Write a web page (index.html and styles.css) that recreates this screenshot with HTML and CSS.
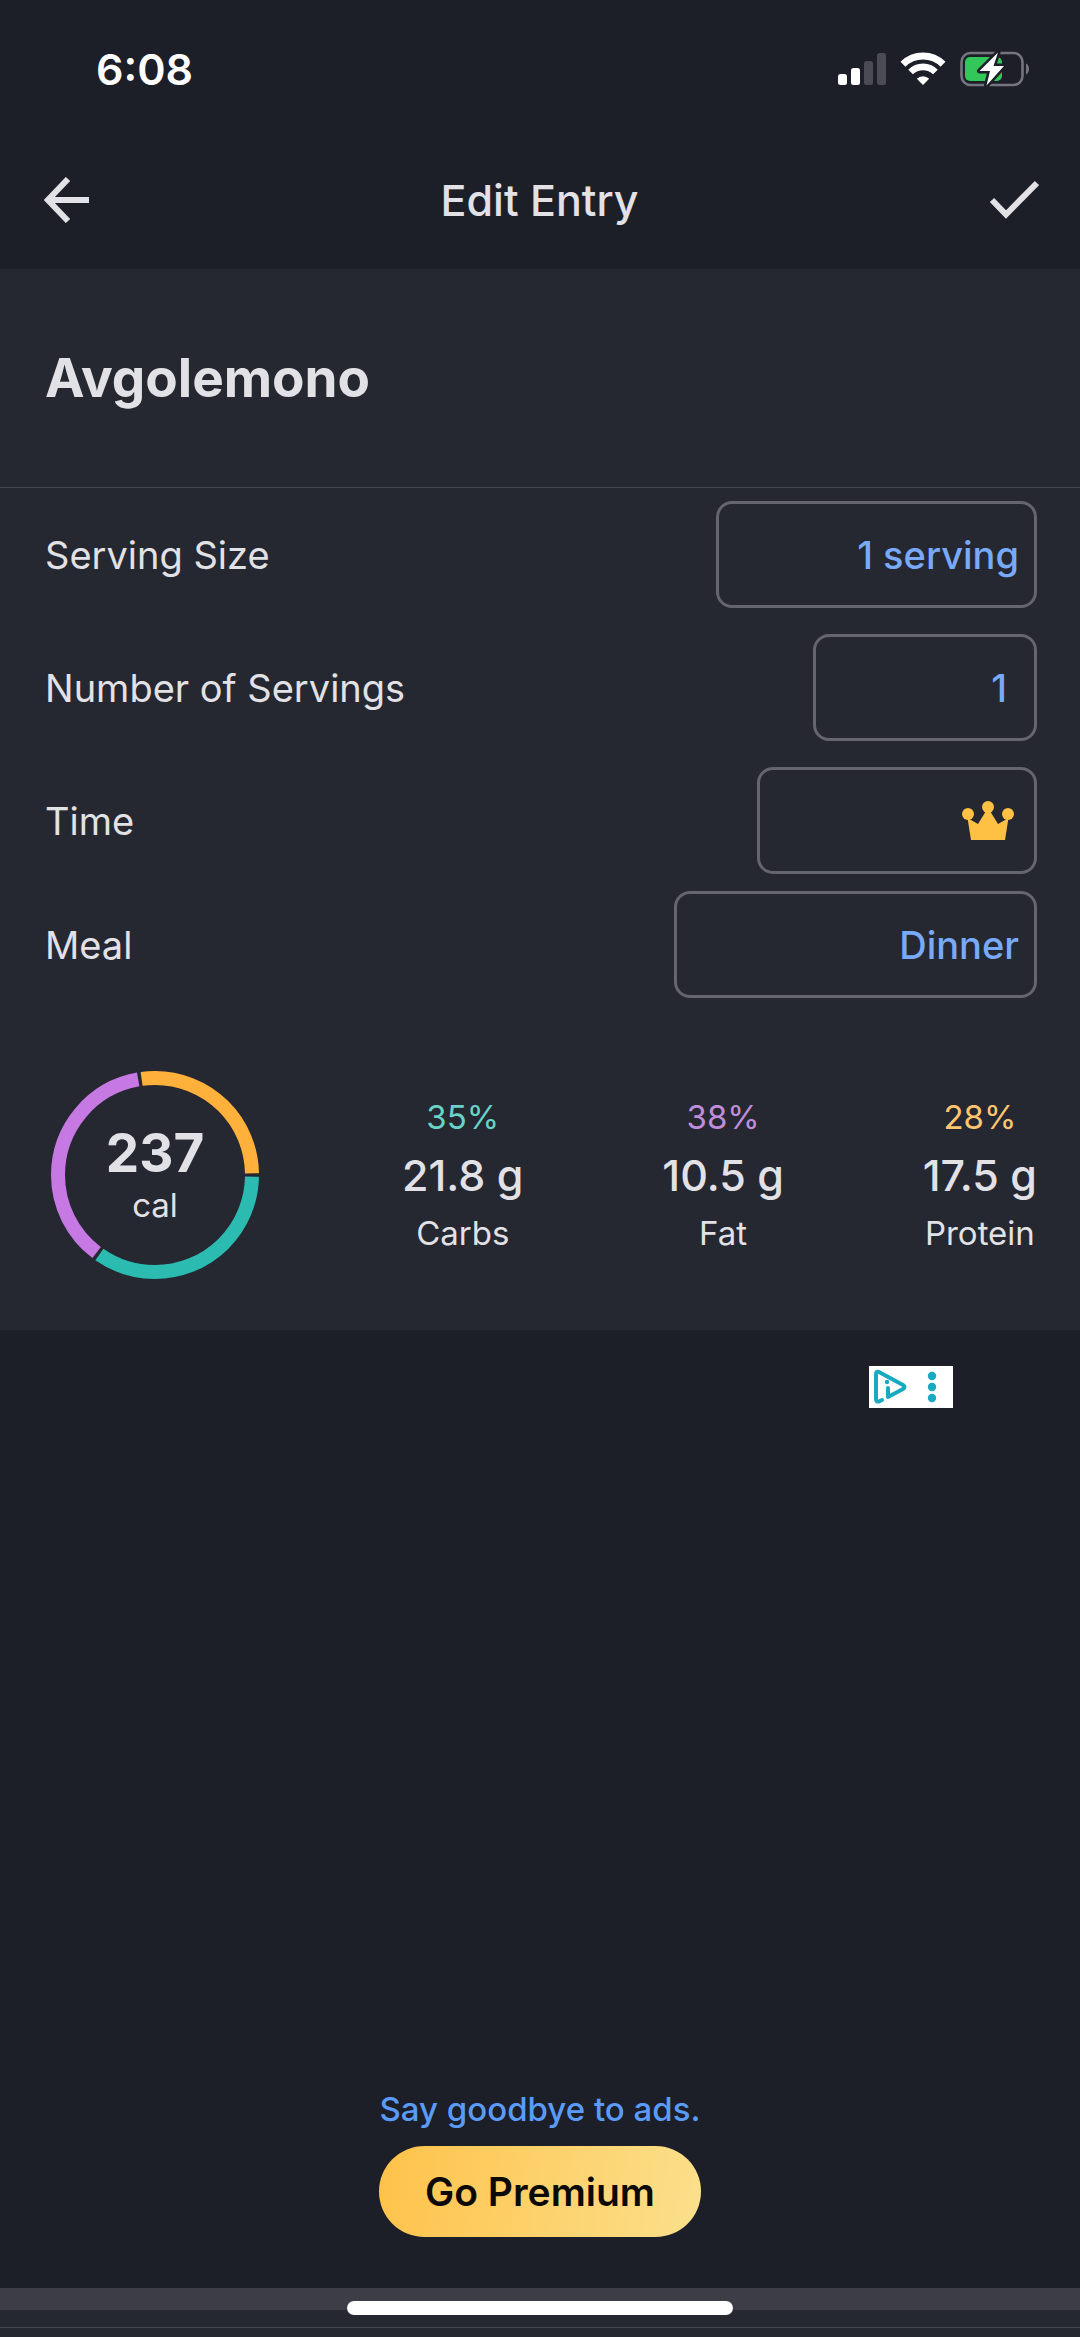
FILE: index.html
```html
<!DOCTYPE html>
<html lang="en">
<head>
    <meta charset="UTF-8">
    <meta name="viewport" content="width=device-width, initial-scale=1.0">
    <title>Edit Entry</title>
    <link rel="stylesheet" href="styles.css">
</head>
<body>

    <header class="header">
        <div class="status-bar">
            <span class="time">6:08</span>
            <div class="status-icons">
                <svg width="48" height="32" viewBox="0 0 48 32">
                    <rect x="0" y="21" width="9" height="11" rx="2.5" fill="#fff"/>
                    <rect x="13" y="15" width="9" height="17" rx="2.5" fill="#fff"/>
                    <rect x="26" y="8" width="9" height="24" rx="2.5" fill="#4a4b55"/>
                    <rect x="39" y="0" width="9" height="32" rx="2.5" fill="#4a4b55"/>
                </svg>
                <svg width="46" height="34" viewBox="0 0 46 34" fill="none" stroke="#fff">
                    <path d="M3 12.2a28.5 28.5 0 0 1 40 0" stroke-width="7"/>
                    <path d="M10.6 20a17.6 17.6 0 0 1 24.8 0" stroke-width="6.6"/>
                    <path d="M23 33l-6.2-6.2a8.8 8.8 0 0 1 12.4 0z" fill="#fff" stroke="none"/>
                </svg>
                <svg width="70" height="36" viewBox="0 0 70 36">
                    <rect x="1.5" y="2" width="61" height="32" rx="9" fill="none" stroke="#74757e" stroke-width="2.6"/>
                    <path d="M66 12.500c4 1.500 4 9.500 0 11z" fill="#74757e"/>
                    <rect x="5" y="6" width="37" height="24" rx="5" fill="#33c759"/>
                    <path d="M38 1.500L19.500 20H30l-3.500 14.500L44 15H33.500z" fill="#fff" stroke="#1c1e28" stroke-width="5" paint-order="stroke" stroke-linejoin="round"/>
                </svg>
            </div>
        </div>
        <nav class="nav">
            <button class="btn-icon" aria-label="Back">
                <svg width="46" height="46" viewBox="0 0 46 46" fill="none" stroke="#e2e2e6" stroke-width="6">
                    <path d="M45 23H5M24 2L4 23l20 21"/>
                </svg>
            </button>
            <h1>Edit Entry</h1>
            <button class="btn-icon" aria-label="Save">
                <svg width="50" height="40" viewBox="0 0 50 40" fill="none" stroke="#e2e2e6" stroke-width="6">
                    <path d="M3 20l14 14.500L48 3"/>
                </svg>
            </button>
        </nav>
    </header>

    <main class="entry">
        <div class="food">
            <h2>Avgolemono</h2>
        </div>

        <form class="fields">
            <div class="row">
                <label for="size">Serving Size</label>
                <select class="box box-size" id="size">
                    <option>1 serving</option>
                </select>
            </div>
            <div class="row">
                <label for="servings">Number of Servings</label>
                <input class="box box-number" id="servings" type="text" inputmode="decimal" value="1">
            </div>
            <div class="row row-time">
                <label for="time">Time</label>
                <button class="box box-time" id="time" type="button">
                    <svg width="52" height="40" viewBox="0 0 52 40" fill="#ffc143">
                        <circle cx="6" cy="13" r="6"/>
                        <circle cx="26" cy="6" r="6"/>
                        <circle cx="46" cy="13" r="6"/>
                        <path d="M5.500 17l10.500 6L24 10h4l8 13 10.500-6L43 39H9z"/>
                    </svg>
                </button>
            </div>
            <div class="row">
                <label for="meal">Meal</label>
                <select class="box box-meal" id="meal">
                    <option>Dinner</option>
                </select>
            </div>
        </form>

        <section class="summary">
            <div class="ring">
                <!-- pathLength 360, so the dashes are in degrees -->
                <svg viewBox="0 0 208 208" fill="none" stroke-width="14">
                    <circle cx="104" cy="104" r="97" pathLength="360" stroke="#2cbbb0" stroke-dasharray="124 236" stroke-dashoffset="-1"/>
                    <circle cx="104" cy="104" r="97" pathLength="360" stroke="#c678e3" stroke-dasharray="133 227" stroke-dashoffset="-127"/>
                    <circle cx="104" cy="104" r="97" pathLength="360" stroke="#ffb13b" stroke-dasharray="97 263" stroke-dashoffset="-262"/>
                </svg>
                <div class="calories">
                    <strong>237</strong>
                    <span>cal</span>
                </div>
            </div>
            <div class="macros">
                <div class="macro">
                    <span class="percent carbs">35%</span>
                    <span class="grams">21.8 g</span>
                    <span class="name">Carbs</span>
                </div>
                <div class="macro">
                    <span class="percent fat">38%</span>
                    <span class="grams">10.5 g</span>
                    <span class="name">Fat</span>
                </div>
                <div class="macro">
                    <span class="percent protein">28%</span>
                    <span class="grams">17.5 g</span>
                    <span class="name">Protein</span>
                </div>
            </div>
        </section>
    </main>

    <section class="ad">
        <button class="ad-choices" aria-label="Ad choices">
            <svg width="84" height="42" viewBox="0 0 84 42" fill="none" stroke="#19a9c0" stroke-linecap="round" stroke-linejoin="round">
                <path d="M13 34l-3 1.500Q7 36 7 33V8q0-3 3-2l24 13q3 2 0 4L19 31V22" stroke-width="4"/>
                <circle cx="18" cy="16" r="2.200" fill="#19a9c0" stroke="none"/>
                <g fill="#19a9c0" stroke="none">
                    <circle cx="63" cy="10" r="4.200"/>
                    <circle cx="63" cy="21" r="4.200"/>
                    <circle cx="63" cy="32" r="4.200"/>
                </g>
            </svg>
        </button>
        <div class="premium">
            <a href="#">Say goodbye to ads.</a>
            <button class="btn-premium">Go Premium</button>
        </div>
    </section>

    <footer class="bottom">
        <div class="bottom-line"></div>
        <div class="home-indicator"></div>
    </footer>

</body>
</html>
```
FILE: styles.css
```css
*{
    box-sizing: border-box;
    padding: 0;
    margin: 0;
}
body{
    min-height: 100vh;
    display: flex;
    flex-direction: column;
    background-color: #1c1e28;
    color: #e2e2e6;
    font-family: Inter, "Liberation Sans", sans-serif;
    font-size: 38px;
}
button, input, select{
    font: inherit;
    border: 0;
    background: none;
}
svg{
    display: block;
}

/* header */
.status-bar{
    height: 130px;
    padding: 8px 50px 0 96px;
    display: flex;
    justify-content: space-between;
    align-items: center;
    color: white;
}
.time{
    font-size: 43px;
    font-weight: 600;
}
.status-icons{
    display: flex;
    align-items: center;
    gap: 14px;
}
.nav{
    height: 139px;
    padding: 0 41px 0 44px;
    display: flex;
    justify-content: space-between;
    align-items: center;
}
.nav h1{
    font-size: 43px;
    font-weight: 500;
}

/* entry */
.entry{
    background-color: #252731;
}
.food{
    height: 219px;
    padding: 0 45px;
    display: flex;
    align-items: center;
    border-bottom: 1px solid #454650;
}
.food h2{
    font-size: 53px;
    font-weight: 700;
}
.fields{
    padding: 13px 43px 0 45px;
}
.row{
    display: flex;
    justify-content: space-between;
    align-items: center;
    margin-bottom: 26px;
}
.row-time{
    margin-bottom: 17px;
}
.box{
    height: 107px;
    padding: 0 15px;
    border: 3px solid #65666d;
    border-radius: 16px;
    color: #79aaf9;
    font-weight: 500;
    text-align: right;
    text-align-last: right;
    appearance: none;
}
.box-size{
    width: 321px;
}
.box-number{
    width: 224px;
    padding-right: 27px;
}
.box-time{
    width: 280px;
    padding-right: 20px;
    display: flex;
    justify-content: flex-end;
    align-items: center;
}
.box-meal{
    width: 363px;
}

/* calories and macros */
.summary{
    padding: 47px 43px 51px 51px;
    display: flex;
    align-items: center;
    gap: 143px;
}
.ring{
    position: relative;
    width: 208px;
    height: 208px;
}
.calories{
    position: absolute;
    inset: 0;
    display: flex;
    flex-direction: column;
    align-items: center;
    justify-content: center;
}
.calories strong{
    font-size: 53px;
    line-height: 60px;
}
.calories span{
    font-size: 33px;
    line-height: 44px;
}
.macros{
    flex: 1;
    display: flex;
    justify-content: space-between;
}
.macro{
    display: flex;
    flex-direction: column;
    align-items: center;
    font-size: 33px;
    line-height: 56px;
}
.grams{
    font-size: 43px;
    font-weight: 500;
    line-height: 60px;
}
.carbs{
    color: #68d3c8;
}
.fat{
    color: #c08ddb;
}
.protein{
    color: #ffc66e;
}

/* ad */
.ad{
    flex: 1;
    display: flex;
    flex-direction: column;
    justify-content: space-between;
    padding: 36px 0 51px;
}
.ad-choices{
    align-self: flex-end;
    margin-right: 127px;
    background-color: white;
}
.premium{
    display: flex;
    flex-direction: column;
    align-items: center;
}
.premium a{
    margin-bottom: 17px;
    color: #5b9bf8;
    font-size: 33px;
    font-weight: 500;
    line-height: 40px;
    text-decoration: none;
}
.btn-premium{
    height: 91px;
    padding: 0 46px;
    border-radius: 46px;
    background: linear-gradient(100deg, #ffc24a, #fbe08c);
    color: #0c0a08;
    font-size: 39px;
    font-weight: 600;
}

/* bottom */
.bottom{
    position: relative;
    height: 49px;
    border-top: 22px solid #3c3d46;
    background-color: #252731;
}
.bottom-line{
    margin-top: 17px;
    height: 1px;
    background-color: #454650;
}
.home-indicator{
    position: absolute;
    top: -9px;
    left: 50%;
    width: 386px;
    height: 14px;
    margin-left: -193px;
    border-radius: 7px;
    background-color: white;
}
```
